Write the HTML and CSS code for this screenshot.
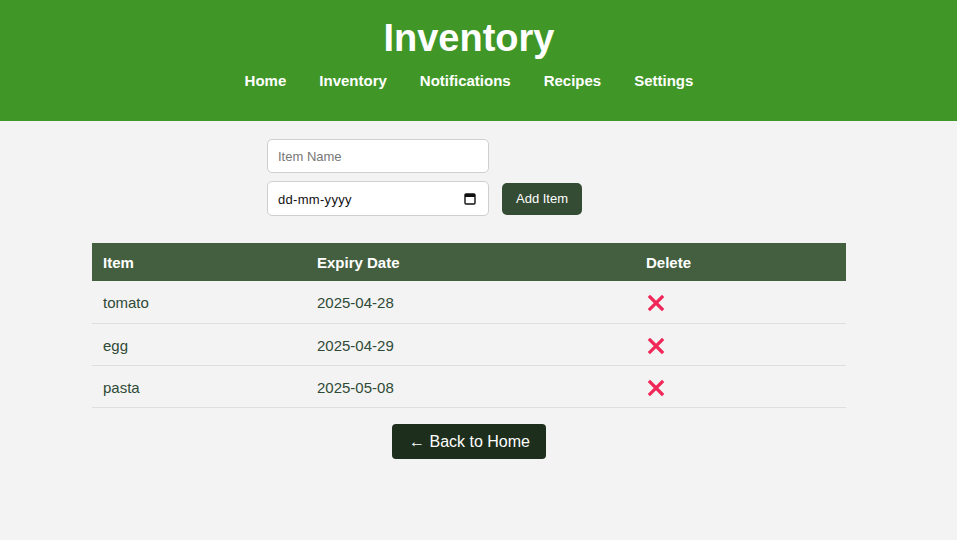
FILE: index.html
```html
<!DOCTYPE html>
<html lang="en">
<head>
<meta charset="utf-8">
<title>Inventory</title>
<link rel="stylesheet" href="styles.css">
</head>
<body>
<header class="site-header">
  <div class="inner">
    <h1 class="title">Inventory</h1>
    <nav class="nav">
      <a href="#">Home</a>
      <a href="#">Inventory</a>
      <a href="#">Notifications</a>
      <a href="#">Recipes</a>
      <a href="#">Settings</a>
    </nav>
  </div>
</header>
<main class="main">
  <form class="add-form">
    <input class="field" type="text" placeholder="Item Name">
    <label class="date-wrap">
      <input class="field date" type="text" placeholder="dd-mm-yyyy">
      <svg class="cal" viewBox="0 0 12 13" width="12" height="13"><rect x="1" y="2" width="10" height="10" rx="1" fill="none" stroke="#111" stroke-width="1.4"/><rect x="1" y="2" width="10" height="3" fill="#111"/></svg>
    </label>
    <button class="add-btn" type="button">Add Item</button>
  </form>
  <table class="inv-table">
    <colgroup>
      <col class="c1"><col class="c2"><col class="c3">
    </colgroup>
    <thead>
      <tr><th>Item</th><th>Expiry Date</th><th>Delete</th></tr>
    </thead>
    <tbody>
      <tr><td>tomato</td><td>2025-04-28</td><td><span class="del"><svg viewBox="0 0 18 18" width="18" height="18"><path d="M3 3 L15 15 M15 3 L3 15" stroke="#f0285a" stroke-width="3.2" stroke-linecap="square"/></svg></span></td></tr>
      <tr><td>egg</td><td>2025-04-29</td><td><span class="del"><svg viewBox="0 0 18 18" width="18" height="18"><path d="M3 3 L15 15 M15 3 L3 15" stroke="#f0285a" stroke-width="3.2" stroke-linecap="square"/></svg></span></td></tr>
      <tr><td>pasta</td><td>2025-05-08</td><td><span class="del"><svg viewBox="0 0 18 18" width="18" height="18"><path d="M3 3 L15 15 M15 3 L3 15" stroke="#f0285a" stroke-width="3.2" stroke-linecap="square"/></svg></span></td></tr>
    </tbody>
  </table>
  <div class="back-wrap">
    <a class="back-btn" href="#">← Back to Home</a>
  </div>
</main>
</body>
</html>
```
FILE: styles.css
```css
* { box-sizing: border-box; }
html, body { margin: 0; padding: 0; }
body {
  background: #f3f3f3;
  font-family: "Liberation Sans", Arial, sans-serif;
  color: #2e4a36;
}
.site-header {
  background: #409728;
  height: 121px;
  padding-top: 17px;
}
.inner {
  padding-right: 19px;
  text-align: center;
}
.title {
  margin: 0;
  font-size: 38px;
  font-weight: bold;
  color: #fff;
  line-height: 43px;
}
.nav {
  margin-top: 12px;
  display: flex;
  justify-content: center;
  gap: 33px;
}
.nav a {
  color: #fff;
  text-decoration: none;
  font-weight: bold;
  font-size: 15px;
  line-height: 17px;
}
.main {
  padding: 18px 19px 0 0;
}
.add-form {
  width: 404px;
  margin: 0 auto;
  display: flex;
  flex-wrap: wrap;
  align-items: center;
  column-gap: 13px;
  row-gap: 8px;
}
.field {
  width: 222px;
  height: 34px;
  border: 1px solid #cfcfcf;
  border-radius: 5px;
  background: #fff;
  padding: 0 10px;
  font-family: "Liberation Sans", Arial, sans-serif;
  font-size: 13px;
  color: #222;
}
.field::placeholder { color: #777; }
.date-wrap {
  position: relative;
  display: block;
  width: 222px;
  height: 35px;
}
.field.date {
  height: 35px;
  letter-spacing: 0.3px;
  padding-top: 1px;
}
.field.date::placeholder { color: #111; }
.cal {
  position: absolute;
  right: 13px;
  top: 11px;
}
.add-btn {
  background: #344b34;
  color: #fff;
  border: none;
  border-radius: 5px;
  height: 32px;
  padding: 0 14px;
  font-family: "Liberation Sans", Arial, sans-serif;
  font-size: 13px;
}
.inv-table {
  width: 754px;
  margin: 27px auto 0;
  border-collapse: collapse;
  table-layout: fixed;
  font-size: 15px;
  line-height: 17px;
}
.c1 { width: 214px; }
.c2 { width: 329px; }
.c3 { width: 211px; }
.inv-table th {
  background: #445f40;
  color: #fff;
  text-align: left;
  font-weight: bold;
  height: 38px;
  padding: 0 12px 0 11px;
}
.inv-table td {
  height: 42px;
  padding: 2px 12px 0 11px;
  border-bottom: 1px solid #dedede;
  color: #2f4a36;
}
.del {
  display: inline-block;
  vertical-align: middle;
  margin-left: 1px;
}
.del svg { display: block; }
.back-wrap {
  text-align: center;
  margin-top: 16px;
}
.back-btn {
  display: inline-block;
  background: #1d2e1d;
  color: #fff;
  text-decoration: none;
  font-size: 16px;
  line-height: 19px;
  padding: 8px 16px 8px 17px;
  border-radius: 4px;
}
```
